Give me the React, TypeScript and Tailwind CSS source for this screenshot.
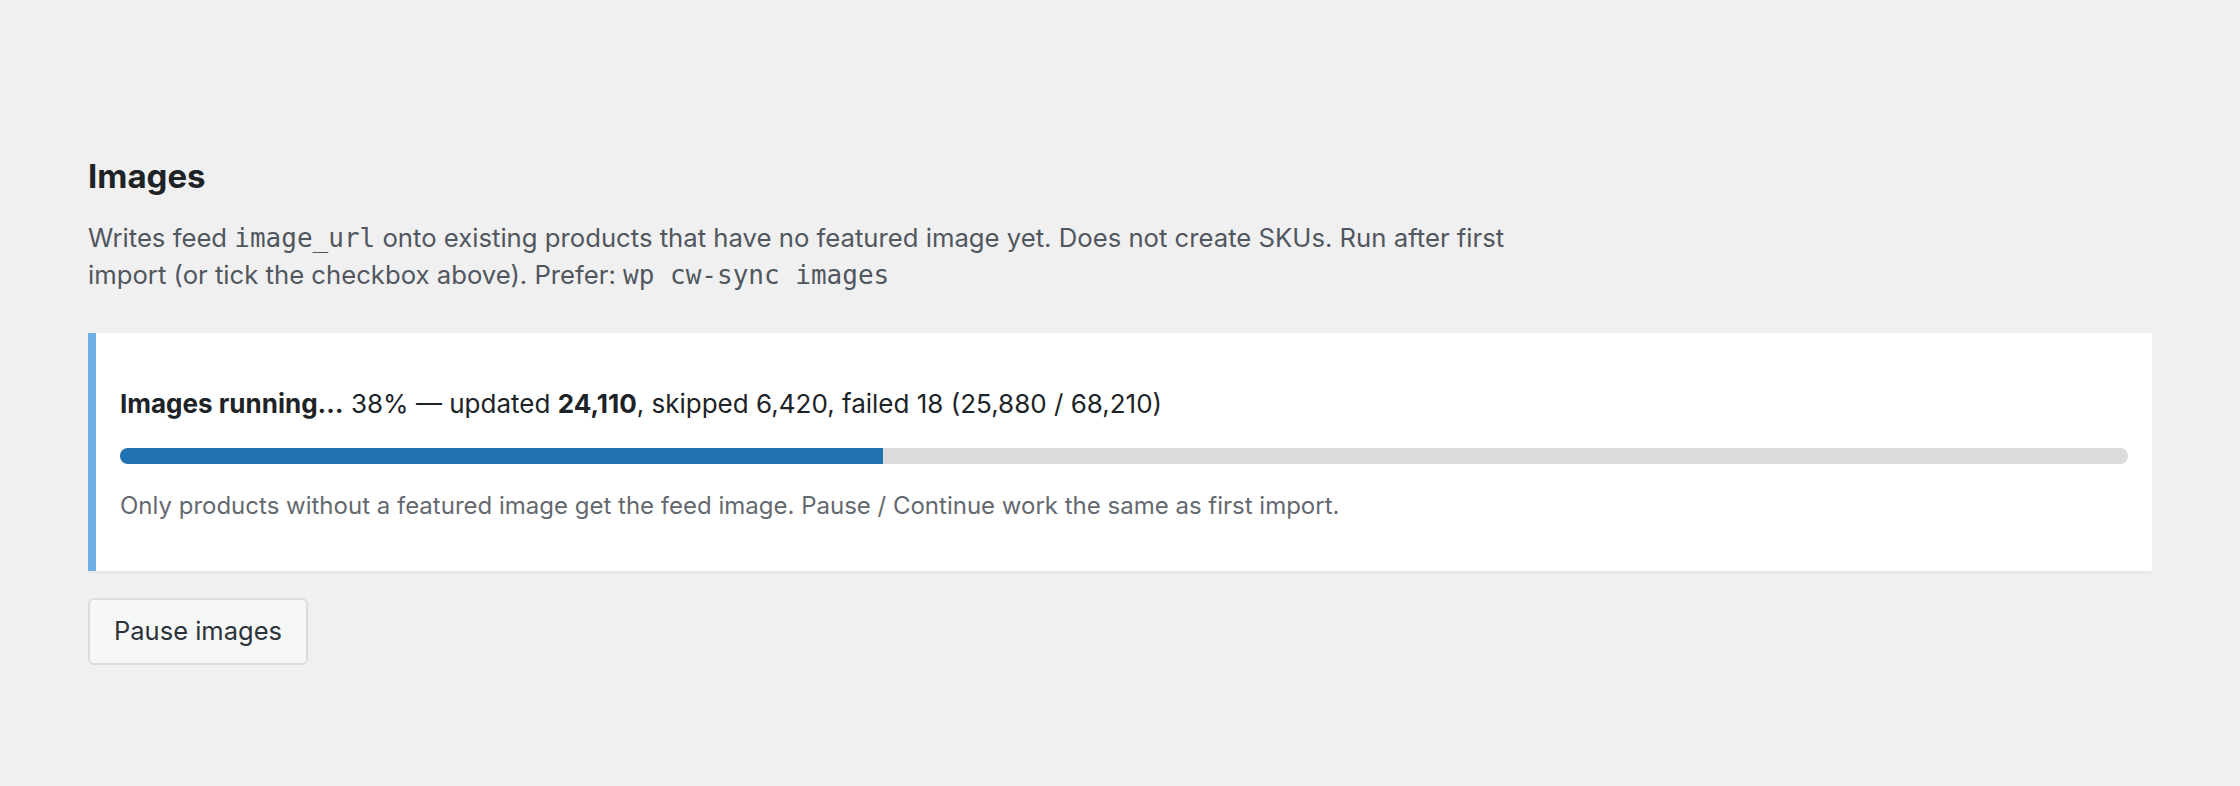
const PROCESSED = 25880
const TOTAL = 68210

function ProgressBar({ value }: { value: number }) {
  return (
    <div className="mt-[25px] h-4 w-full rounded-full bg-[#dcdcde] overflow-hidden">
      <div className="h-full bg-[#2271b1]" style={{ width: `${value}%` }} />
    </div>
  )
}

function StatusNotice() {
  const percent = Math.round((PROCESSED / TOTAL) * 100)

  return (
    <div className="mt-[40px] bg-white border-l-8 border-[#72aee6] shadow-[0_2px_2px_rgba(0,0,0,0.04)] px-6 pt-[51px] pb-[47px]">
      <p className="text-[26px] leading-[39px] text-[#1d2327]">
        <strong className="font-bold">Images running…</strong> {percent}% — updated{' '}
        <strong className="font-bold">24,110</strong>, skipped 6,420, failed 18 (25,880 / 68,210)
      </p>
      <ProgressBar value={percent} />
      <p className="mt-6 text-[24px] leading-[36px] text-[#646970]">
        Only products without a featured image get the feed image. Pause / Continue work the same as first import.
      </p>
    </div>
  )
}

export default function App() {
  return (
    <div className="min-h-screen bg-[#f0f0f1] px-[88px] pt-[156px] font-['Inter',sans-serif]">
      <h2 className="text-[33px] leading-[40px] font-bold text-[#1d2327]">Images</h2>
      <p className="mt-[23px] max-w-[1470px] text-[25.7px] leading-[37px] text-[#50575e]">
        Writes feed <code className="font-['DejaVu_Sans_Mono',monospace] text-[26px] leading-[20px]">image_url</code>{' '}
        onto existing products that have no featured image yet. Does not create SKUs. Run after first import (or tick
        the checkbox above). Prefer:{' '}
        <code className="font-['DejaVu_Sans_Mono',monospace] text-[26px] leading-[20px]">wp cw-sync images</code>
      </p>

      <StatusNotice />

      <button className="mt-[27px] h-[67px] px-6 rounded-md border-2 border-[#dcdcde] bg-[#f6f7f7] text-[25.5px] text-[#2c3338]">
        Pause images
      </button>
    </div>
  )
}
